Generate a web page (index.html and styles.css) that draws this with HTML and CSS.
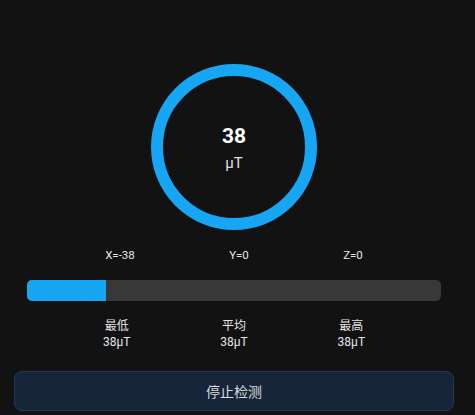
FILE: index.html
```html
<!DOCTYPE html>
<html lang="zh">
<head>
<meta charset="utf-8">
<link rel="stylesheet" href="styles.css">
</head>
<body>
<div class="app">
  <div class="gauge">
    <div class="gauge-value">38</div>
    <div class="gauge-unit">μT</div>
  </div>
  <div class="axes">
    <span>X=-38</span>
    <span>Y=0</span>
    <span>Z=0</span>
  </div>
  <div class="bar"><div class="bar-fill" style="width:19%"></div></div>
  <div class="stats">
    <div class="stat"><div class="stat-label">最低</div><div class="stat-value">38μT</div></div>
    <div class="stat"><div class="stat-label">平均</div><div class="stat-value">38μT</div></div>
    <div class="stat"><div class="stat-label">最高</div><div class="stat-value">38μT</div></div>
  </div>
  <button class="stop-btn">停止检测</button>
</div>
</body>
</html>
```
FILE: styles.css
```css
html, body {
  margin: 0;
  padding: 0;
  background: #121212;
  height: 100%;
}
body {
  font-family: Roboto, "Noto Sans CJK SC", sans-serif;
  color: #e6e6e6;
}
.app {
  width: 440px;
  margin-left: 14px;
  padding-top: 64px;
  display: flex;
  flex-direction: column;
}
.gauge {
  width: 166px;
  height: 166px;
  box-sizing: border-box;
  border: 12px solid #17a6f4;
  border-radius: 50%;
  margin: 0 auto;
  display: flex;
  flex-direction: column;
  align-items: center;
  justify-content: center;
  padding-top: 2px;
}
.gauge-value {
  font-size: 21px;
  font-weight: 700;
  line-height: 24px;
  color: #ffffff;
  margin-bottom: 6px;
}
.gauge-unit {
  font-size: 15px;
  line-height: 18px;
  color: #e0e0e0;
}
.axes {
  width: 352px;
  margin: 19px auto 0;
  display: flex;
  justify-content: space-around;
  font-size: 11.5px;
  line-height: 13px;
  color: #e6e6e6;
}
.bar {
  margin: 18px 13px 0;
  height: 21px;
  background: #383838;
  border-radius: 5px;
  overflow: hidden;
}
.bar-fill {
  height: 100%;
  background: #17a6f4;
}
.stats {
  width: 352px;
  margin: 17px auto 0;
  display: flex;
  justify-content: space-around;
  text-align: center;
}
.stat-label, .stat-value {
  font-size: 12px;
  line-height: 16px;
  color: #e6e6e6;
}
.stop-btn {
  margin-top: 21px;
  height: 40px;
  width: 440px;
  box-sizing: border-box;
  background: #16253a;
  border: 1px solid #1f3b5c;
  border-radius: 8px;
  color: #dcdcdc;
  font-family: Roboto, "Noto Sans CJK SC", sans-serif;
  font-size: 14px;
  padding: 0;
}
```
